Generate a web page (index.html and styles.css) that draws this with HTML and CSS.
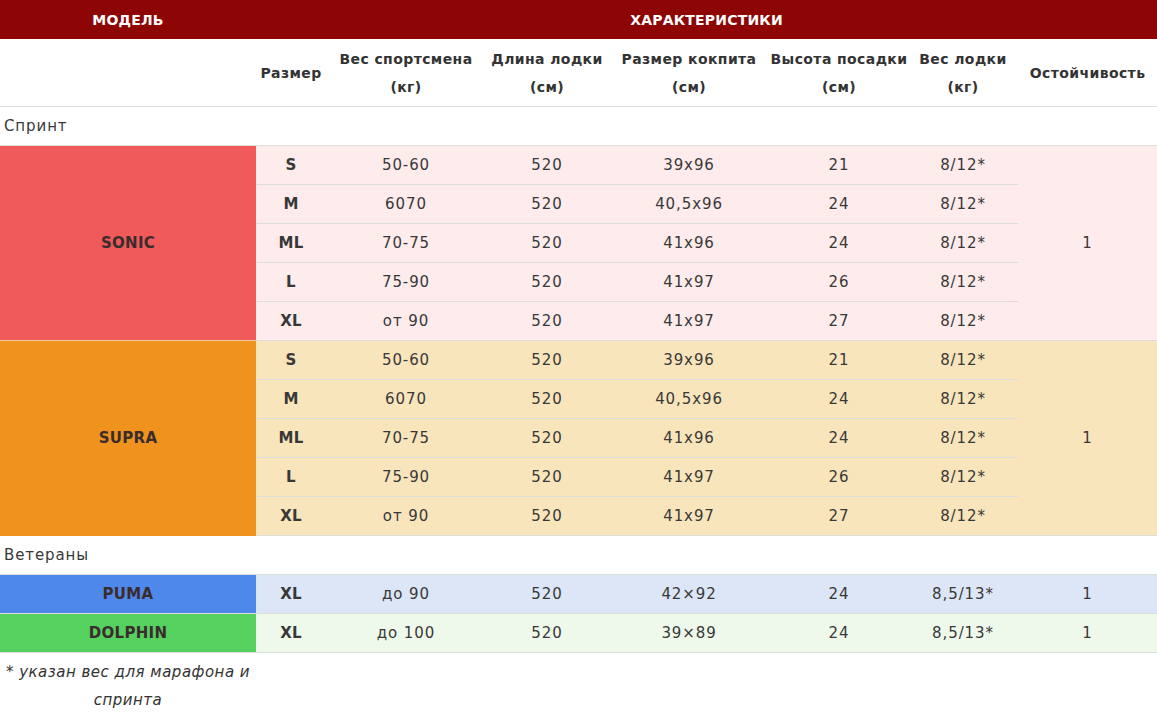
FILE: index.html
```html
<!DOCTYPE html>
<html lang="ru">
<head>
<meta charset="utf-8">
<title>Характеристики лодок</title>
<link rel="stylesheet" href="styles.css">
</head>
<body>
<table class="spec">
  <colgroup>
    <col class="c-model"><col class="c-size"><col class="c-weight"><col class="c-len"><col class="c-cock"><col class="c-height"><col class="c-bw"><col class="c-stab">
  </colgroup>
  <thead>
    <tr class="top">
      <th>МОДЕЛЬ</th>
      <th colspan="7">ХАРАКТЕРИСТИКИ</th>
    </tr>
    <tr class="sub">
      <th></th>
      <th>Размер</th>
      <th>Вес спортсмена<br>(кг)</th>
      <th>Длина лодки<br>(см)</th>
      <th>Размер кокпита<br>(см)</th>
      <th>Высота посадки<br>(см)</th>
      <th>Вес лодки<br>(кг)</th>
      <th>Остойчивость</th>
    </tr>
  </thead>
  <tbody>
    <tr class="section"><td colspan="8">Спринт</td></tr>

    <tr class="sonic">
      <td class="model" rowspan="5">SONIC</td>
      <td class="size">S</td><td>50-60</td><td>520</td><td>39x96</td><td>21</td><td>8/12*</td>
      <td class="stab" rowspan="5">1</td>
    </tr>
    <tr class="sonic"><td class="size">M</td><td>6070</td><td>520</td><td>40,5x96</td><td>24</td><td>8/12*</td></tr>
    <tr class="sonic"><td class="size">ML</td><td>70-75</td><td>520</td><td>41x96</td><td>24</td><td>8/12*</td></tr>
    <tr class="sonic"><td class="size">L</td><td>75-90</td><td>520</td><td>41x97</td><td>26</td><td>8/12*</td></tr>
    <tr class="sonic"><td class="size">XL</td><td>от 90</td><td>520</td><td>41x97</td><td>27</td><td>8/12*</td></tr>

    <tr class="supra">
      <td class="model" rowspan="5">SUPRA</td>
      <td class="size">S</td><td>50-60</td><td>520</td><td>39x96</td><td>21</td><td>8/12*</td>
      <td class="stab" rowspan="5">1</td>
    </tr>
    <tr class="supra"><td class="size">M</td><td>6070</td><td>520</td><td>40,5x96</td><td>24</td><td>8/12*</td></tr>
    <tr class="supra"><td class="size">ML</td><td>70-75</td><td>520</td><td>41x96</td><td>24</td><td>8/12*</td></tr>
    <tr class="supra"><td class="size">L</td><td>75-90</td><td>520</td><td>41x97</td><td>26</td><td>8/12*</td></tr>
    <tr class="supra"><td class="size">XL</td><td>от 90</td><td>520</td><td>41x97</td><td>27</td><td>8/12*</td></tr>

    <tr class="section"><td colspan="8">Ветераны</td></tr>

    <tr class="puma">
      <td class="model">PUMA</td>
      <td class="size">XL</td><td>до 90</td><td>520</td><td>42×92</td><td>24</td><td>8,5/13*</td><td>1</td>
    </tr>
    <tr class="dolphin">
      <td class="model">DOLPHIN</td>
      <td class="size">XL</td><td>до 100</td><td>520</td><td>39×89</td><td>24</td><td>8,5/13*</td><td>1</td>
    </tr>
  </tbody>
</table>
<p class="note">* указан вес для марафона и спринта</p>
</body>
</html>
```

FILE: styles.css
```css
body {
  margin: 0;
  font-family: "DejaVu Sans", "Liberation Sans", sans-serif;
  color: #333;
  background: #fff;
}

.spec {
  width: 1157px;
  border-collapse: collapse;
  table-layout: fixed;
}

.c-model { width: 256px; }
.c-size { width: 70px; }
.c-weight { width: 160px; }
.c-len { width: 122px; }
.c-cock { width: 162px; }
.c-height { width: 138px; }
.c-bw { width: 110px; }
.c-stab { width: 139px; }

.spec th,
.spec td {
  padding: 0;
  text-align: center;
  vertical-align: middle;
  font-weight: normal;
}

.spec td {
  height: 38px;
  font-size: 15px;
  letter-spacing: 0.9px;
  color: #383838;
  border-bottom: 1px solid #dddddd;
}

.spec .top th {
  height: 39px;
  background: #8e0505;
  color: #fff;
  font-size: 14px;
  font-weight: bold;
  letter-spacing: 0.2px;
}

.spec .sub th {
  height: 67px;
  font-size: 14px;
  font-weight: 600;
  letter-spacing: 0.4px;
  line-height: 28px;
  color: #333;
  border-bottom: 1px solid #dddddd;
  white-space: nowrap;
}

.spec .section td {
  text-align: left;
  padding-left: 4px;
}

.spec .size { font-weight: bold; letter-spacing: 0.3px; }

.spec .model {
  font-weight: bold;
  font-size: 15px;
  letter-spacing: 0.3px;
  color: #3a2c2c;
}

.sonic td { background: #feebeb; }
.spec .sonic .model { background: #f05a5b; border-bottom-color: #f4c9a8; }

.supra td { background: #f8e5bb; }
.spec .supra .model { background: #f0921e; border-bottom-color: #f0921e; }

.puma td { background: #dde6f6; }
.spec .puma .model { background: #4f88eb; border-bottom-color: #dddddd; }

.dolphin td { background: #eef9eb; }
.spec .dolphin .model { background: #55d160; border-bottom-color: #dddddd; }

.note {
  width: 256px;
  margin: 5px 0 0;
  text-align: center;
  font-style: italic;
  font-size: 15px;
  letter-spacing: 0.5px;
  line-height: 28px;
}
```
